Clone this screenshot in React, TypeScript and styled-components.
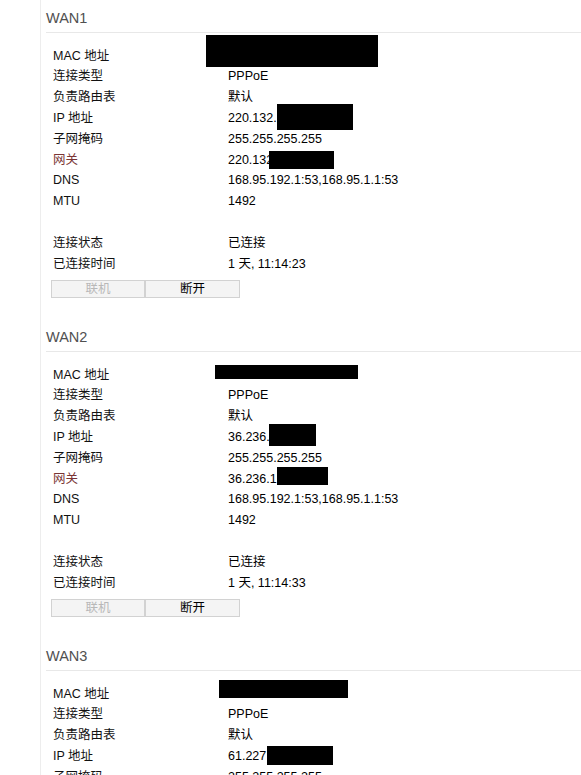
import React from "react";
import styled, { createGlobalStyle } from "styled-components";

const Global = createGlobalStyle`
  html, body { margin: 0; padding: 0; background: #fff; }
  body {
    font-family: "Liberation Sans", Arial, "Noto Sans CJK SC", sans-serif;
    font-size: 12.5px;
    color: #000;
    overflow: hidden;
  }
`;

const Page = styled.div`
  margin-left: 40px;
  border-left: 1px solid #ededed;
  padding-left: 5px;
  min-height: 100vh;
`;

const Section = styled.section`
  padding-top: 8px;
  margin-bottom: 21px;
`;

const Heading = styled.h2`
  margin: 0;
  font-size: 14.5px;
  font-weight: normal;
  line-height: 20px;
  color: #505050;
  padding-bottom: 4px;
  border-bottom: 1px solid #e8e8e8;
`;

const Table = styled.div`
  margin-top: 12.6px;
  padding-left: 7px;
`;

const Row = styled.div`
  display: grid;
  grid-template-columns: 175px 1fr;
  align-items: stretch;
  height: 20.8px;
  line-height: 20.8px;
  white-space: nowrap;
`;

const Label = styled.div<{ $accent?: boolean }>`
  color: ${(p) => (p.$accent ? "#7a3535" : "#111")};
`;

const Value = styled.div`
  position: relative;
  color: #000;
`;

const Redact = styled.span`
  position: absolute;
  background: #000;
`;

const Buttons = styled.div`
  display: flex;
  margin-top: 5.6px;
  padding-left: 5px;
`;

const Btn = styled.button<{ $w: number }>`
  box-sizing: border-box;
  width: ${(p) => p.$w}px;
  height: 18px;
  margin: 0;
  padding: 0;
  border: 1px solid #d2d2d2;
  background: #f4f4f4;
  font: inherit;
  font-size: 12.5px;
  line-height: 16px;
  color: ${(p) => (p.disabled ? "#b8b8b8" : "#000")};
`;

type Box = { l: number; t: number; w: number; h: number };
type RowData = { label: string; value: string; accent?: boolean; box?: Box };

type Wan = { name: string; rows: RowData[]; time: string };

const wans: Wan[] = [
  {
    name: "WAN1",
    time: "1 天, 11:14:23",
    rows: [
      { label: "MAC 地址", value: "", box: { l: -22, t: -10.6, w: 172, h: 32 } },
      { label: "连接类型", value: "PPPoE" },
      { label: "负责路由表", value: "默认" },
      { label: "IP 地址", value: "220.132.", box: { l: 49, t: -4, w: 76, h: 26 } },
      { label: "子网掩码", value: "255.255.255.255" },
      { label: "网关", value: "220.132", accent: true, box: { l: 41, t: 1.4, w: 65, h: 18 } },
      { label: "DNS", value: "168.95.192.1:53,168.95.1.1:53" },
      { label: "MTU", value: "1492" },
    ],
  },
  {
    name: "WAN2",
    time: "1 天, 11:14:33",
    rows: [
      { label: "MAC 地址", value: "", box: { l: -13, t: 0.4, w: 143, h: 14 } },
      { label: "连接类型", value: "PPPoE" },
      { label: "负责路由表", value: "默认" },
      { label: "IP 地址", value: "36.236.", box: { l: 41, t: -3, w: 47, h: 22 } },
      { label: "子网掩码", value: "255.255.255.255" },
      { label: "网关", value: "36.236.1", accent: true, box: { l: 49, t: -1.6, w: 51, h: 18 } },
      { label: "DNS", value: "168.95.192.1:53,168.95.1.1:53" },
      { label: "MTU", value: "1492" },
    ],
  },
  {
    name: "WAN3",
    time: "1 天, 11:14:33",
    rows: [
      { label: "MAC 地址", value: "", box: { l: -9, t: -3.6, w: 129, h: 18 } },
      { label: "连接类型", value: "PPPoE" },
      { label: "负责路由表", value: "默认" },
      { label: "IP 地址", value: "61.227", box: { l: 39, t: 0, w: 66, h: 19 } },
      { label: "子网掩码", value: "255.255.255.255" },
      { label: "网关", value: "61.227", accent: true },
      { label: "DNS", value: "168.95.192.1:53,168.95.1.1:53" },
      { label: "MTU", value: "1492" },
    ],
  },
];

function WanSection({ wan }: { wan: Wan }) {
  return (
    <Section>
      <Heading>{wan.name}</Heading>
      <Table>
        {wan.rows.map((r, i) => (
          <Row key={i}>
            <Label $accent={r.accent}>{r.label}</Label>
            <Value>
              {r.value}
              {r.box && (
                <Redact
                  style={{ left: r.box.l, top: r.box.t, width: r.box.w, height: r.box.h }}
                />
              )}
            </Value>
          </Row>
        ))}
        <Row />
        <Row>
          <Label>连接状态</Label>
          <Value>已连接</Value>
        </Row>
        <Row>
          <Label>已连接时间</Label>
          <Value>{wan.time}</Value>
        </Row>
      </Table>
      <Buttons>
        <Btn $w={94} disabled>
          联机
        </Btn>
        <Btn $w={95}>断开</Btn>
      </Buttons>
    </Section>
  );
}

export default function App() {
  return (
    <>
      <Global />
      <Page>
        {wans.map((w) => (
          <WanSection key={w.name} wan={w} />
        ))}
      </Page>
    </>
  );
}
